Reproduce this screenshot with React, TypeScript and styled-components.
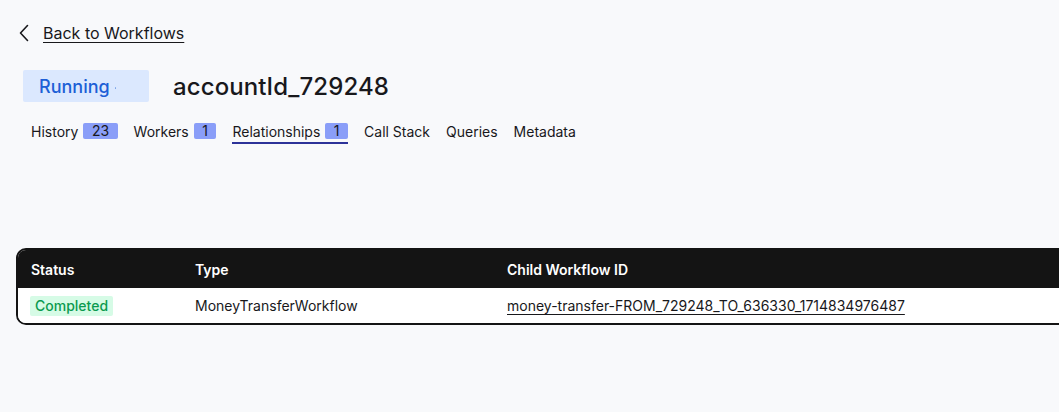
import React from "react";
import styled, { createGlobalStyle } from "styled-components";

const Global = createGlobalStyle`
  html, body { margin: 0; padding: 0; background: #f8f9fb; overflow: hidden; }
  body { font-family: Inter, "Noto Sans", sans-serif; color: #18181b; }
  * { box-sizing: border-box; }
`;

const Page = styled.div`
  width: 1059px;
  height: 412px;
  padding: 21px 0 0 16px;
  display: flex;
  flex-direction: column;
  overflow: hidden;
`;

const BackLink = styled.a`
  display: flex;
  align-items: center;
  gap: 13px;
  padding-left: 2px;
  font-size: 16px;
  color: #18181b;
  text-decoration: none;
  height: 24px;
  span {
    text-decoration: underline;
    text-underline-offset: 3px;
    text-decoration-thickness: 1px;
  }
`;

const Header = styled.div`
  display: flex;
  align-items: center;
  gap: 24px;
  margin-top: 25px;
  padding-left: 7px;
`;

const StatusPill = styled.div`
  width: 126px;
  height: 32px;
  background: #dbe8fe;
  border-radius: 2px;
  display: flex;
  align-items: center;
  padding-left: 16px;
  gap: 5px;
  font-size: 18px;
  font-weight: 500;
  color: #1d5fd6;
`;

const Dot = styled.i`
  width: 1.5px;
  height: 1.5px;
  background: #7aa3e8;
  border-radius: 50%;
  margin-top: 4px;
`;

const Title = styled.h1`
  margin: 0;
  font-size: 24px;
  font-weight: 500;
  letter-spacing: 0.1px;
  color: #18181b;
`;

const Tabs = styled.nav`
  display: flex;
  gap: 16px;
  margin-top: 19px;
  padding-left: 15px;
`;

const Tab = styled.div<{ $active?: boolean }>`
  display: flex;
  align-items: center;
  gap: 5px;
  font-size: 14px;
  height: 20px;
  color: #18181b;
  padding-bottom: 1px;
  border-bottom: 2px solid ${(p) => (p.$active ? "#2d3399" : "transparent")};
  box-sizing: content-box;
`;

const Count = styled.span`
  background: #8a9ef8;
  color: #18181b;
  border-radius: 2px;
  font-size: 14px;
  height: 16px;
  line-height: 16px;
  padding: 0 8.5px;
`;

const Table = styled.div`
  margin-top: 104px;
  width: 1100px;
  flex-shrink: 0;
  border: 2px solid #141414;
  border-radius: 10px;
  overflow: hidden;
  background: #fff;
`;

const Row = styled.div<{ $head?: boolean }>`
  display: grid;
  grid-template-columns: 164px 312px 1fr;
  align-items: center;
  height: ${(p) => (p.$head ? "38px" : "35px")};
  background: ${(p) => (p.$head ? "#141414" : "#fff")};
  color: ${(p) => (p.$head ? "#fff" : "#18181b")};
  font-size: 14px;
  font-weight: ${(p) => (p.$head ? 600 : 400)};
`;

const Cell = styled.div`
  padding-left: 13px;
  white-space: nowrap;
`;

const Completed = styled.span`
  display: inline-block;
  background: #d6fbe6;
  color: #0b9a4f;
  font-weight: 500;
  border-radius: 2px;
  padding: 1px 5px;
  line-height: 18px;
  margin-left: -1px;
`;

const IdLink = styled.a`
  color: #18181b;
  text-decoration: underline;
  text-underline-offset: 3px;
`;

export default function App() {
  return (
    <>
      <Global />
      <Page>
        <BackLink href="#">
          <svg width="12" height="18" viewBox="0 0 12 18" fill="none">
            <path d="M9.5 1.5 L2.5 9 L9.5 16.5" stroke="#18181b" strokeWidth="1.6" strokeLinecap="round" strokeLinejoin="round" />
          </svg>
          <span>Back to Workflows</span>
        </BackLink>
        <Header>
          <StatusPill>
            Running
            <Dot />
          </StatusPill>
          <Title>accountId_729248</Title>
        </Header>
        <Tabs>
          <Tab>History<Count>23</Count></Tab>
          <Tab>Workers<Count>1</Count></Tab>
          <Tab $active>Relationships<Count>1</Count></Tab>
          <Tab>Call Stack</Tab>
          <Tab>Queries</Tab>
          <Tab>Metadata</Tab>
        </Tabs>
        <Table>
          <Row $head>
            <Cell>Status</Cell>
            <Cell>Type</Cell>
            <Cell>Child Workflow ID</Cell>
          </Row>
          <Row>
            <Cell><Completed>Completed</Completed></Cell>
            <Cell>MoneyTransferWorkflow</Cell>
            <Cell><IdLink href="#">money-transfer-FROM_729248_TO_636330_1714834976487</IdLink></Cell>
          </Row>
        </Table>
      </Page>
    </>
  );
}
